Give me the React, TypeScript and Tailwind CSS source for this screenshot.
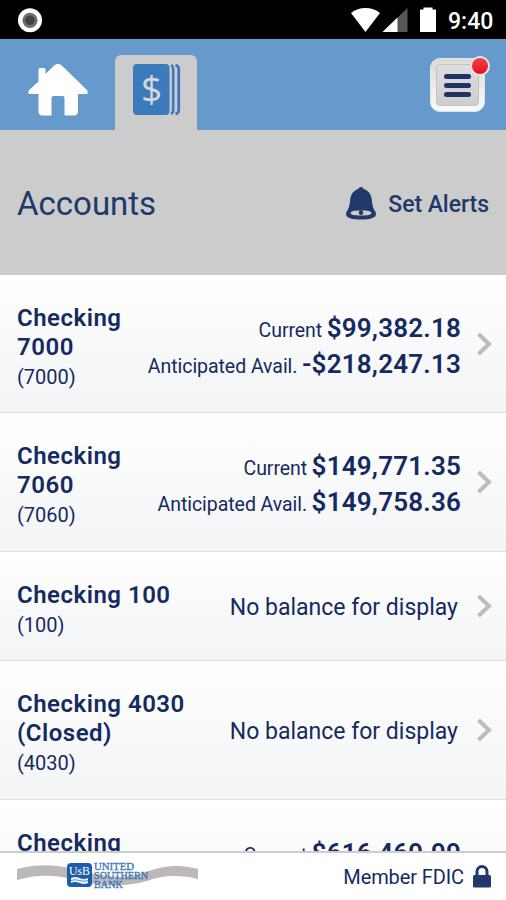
import React from 'react';

type Account = {
  name: string[];
  number: string;
  current?: string;
  available?: string;
  height: string;
};

const accounts: Account[] = [
  { name: ['Checking', '7000'], number: '(7000)', current: '$99,382.18', available: '-$218,247.13', height: 'h-[138px]' },
  { name: ['Checking', '7060'], number: '(7060)', current: '$149,771.35', available: '$149,758.36', height: 'h-[139px]' },
  { name: ['Checking 100'], number: '(100)', height: 'h-[109px]' },
  { name: ['Checking 4030', '(Closed)'], number: '(4030)', height: 'h-[139px]' },
  { name: ['Checking'], number: '', current: '$616,469.99', height: 'h-[139px]' }
];

const StatusBar: React.FC = () => (
  <div className="h-[39px] shrink-0 bg-black flex items-center justify-between pl-[18px] pr-[13px]">
    <svg width="25" height="25" viewBox="0 0 25 25" className="mt-[2px]">
      <circle cx="12" cy="12.3" r="12" fill="#fff" />
      <circle cx="12" cy="12.3" r="7.6" fill="#6f6f6f" />
      <circle cx="12" cy="12.3" r="4.8" fill="#444" />
    </svg>
    <div className="flex items-center">
      <svg width="86" height="26" viewBox="0 0 86 26" className="mr-[11px]">
        <path d="M0 6C8-.7 21-.7 29 6L14.500 25Z" fill="#fff" />
        <path d="M56.500 1V25H31.500Z" fill="#555" />
        <path d="M46.500 10.500V25H31.500Z" fill="#fff" />
        <path d="M69 2.500h3.500V.5h9v2H85V25H69Z" fill="#fff" />
      </svg>
      <span className="w-[45px] pt-[3px] text-[23px] font-medium leading-none text-white">9:40</span>
    </div>
  </div>
);

const NavBar: React.FC = () => (
  <nav className="h-[91px] shrink-0 bg-[#6699cc] flex items-end pr-[18px]">
    <button className="w-[115px] h-full">
      <svg width="115" height="91" viewBox="0 0 115 91">
        <path
          d="M28.500 55v-3.500L38.500 42.500V30.500q0-1.500 1.500-1.500h4q1.500 0 1.500 1.500v4.500l9-8.700q3.500-3.200 7 0L87.500 51.500V55H78v17.500q0 4-4 4h-9.500V59q0-2-2-2H53.500q-2 0-2 2v17.500H42.500q-4 0-4-4V55Z"
          fill="#fff"
        />
      </svg>
    </button>
    <button className="w-[82px] h-[75px] bg-[#cccccc] rounded-t-[6px] flex pl-[18px] pt-[9px]">
      <svg width="48" height="51" viewBox="0 0 48 51">
        <rect width="36.500" height="51" rx="4" fill="#3c7abc" />
        <path d="M38 1q2.200 1 2.200 4v41q0 3-2.200 4" fill="none" stroke="#3c7abc" strokeWidth="2.600" />
        <path d="M42.500 1q3.200 1 3.200 4v41q0 3-3.200 4" fill="none" stroke="#3c7abc" strokeWidth="2.800" />
        <text x="18.500" y="38" textAnchor="middle" fontFamily="Open Sans, sans-serif" fontSize="37" fill="#d8d8d8">$</text>
      </svg>
    </button>
    <button className="relative ml-auto self-start mt-[19px] mr-[3px] w-[55px] h-[54px] rounded-[10px] bg-gradient-to-b from-[#dadada] to-[#fafafa] border border-[#e5e5e5] p-[5px]">
      <span className="w-full h-full rounded-[4px] bg-gradient-to-b from-[#dedede] to-[#cecece] border border-[#c2c2c2] flex flex-col items-center justify-center gap-[4px]">
        <span className="w-[27px] h-[5px] rounded-full bg-[#223166]" />
        <span className="w-[27px] h-[5px] rounded-full bg-[#223166]" />
        <span className="w-[27px] h-[5px] rounded-full bg-[#223166]" />
      </span>
      <span className="absolute -top-[3px] -right-[6px] w-[20px] h-[20px] rounded-full border-2 border-[#f0e2e6] bg-gradient-to-b from-[#f04048] to-[#e11220]" />
    </button>
  </nav>
);

const Bell: React.FC = () => (
  <svg width="30" height="33" viewBox="0 0 30 33" className="mr-[12px]">
    <path
      fillRule="evenodd"
      d="M15 0c1.500 0 2.200.8 2.600 2c4.500 1.300 7.400 5 8.100 10c.6 6 1.300 8.500 2.900 11.500c1 1.500 1.400 2.500 1.400 3.700c0 3.800-6.500 5.300-15 5.300s-15-1.500-15-5.300c0-1.200.4-2.200 1.400-3.700C3 20.500 3.700 18 4.300 12c.7-5 3.600-8.700 8.100-10c.4-1.200 1.100-2 2.600-2ZM15 23.500C8 23.500 4.500 24.300 4.500 26S8 28.500 15 28.500s10.500-.8 10.500-2.500S22 23.500 15 23.500Z"
      fill="#20386c"
    />
    <ellipse cx="15" cy="25.500" rx="2.200" ry="2.500" fill="#20386c" />
  </svg>
);

const Balance: React.FC<{ label: string; amount: string }> = ({ label, amount }) => (
  <div className="h-[36px] flex items-baseline justify-end gap-[4.5px] text-[19.5px] leading-[36px]">
    <span className="tracking-[-0.05px]">{label}</span>
    <b className="text-[26px] font-semibold tracking-[0.2px]">{amount}</b>
  </div>
);

const AccountRow: React.FC<{ account: Account }> = ({ account }) => (
  <li className={`${account.height} shrink-0 flex items-center pl-[17px] pr-[14px] border-b border-[#dddfe1] bg-gradient-to-b from-white to-[#f3f4f6]`}>
    <div className="whitespace-nowrap self-start pt-[29px]">
      {account.name.map((line) => (
        <div key={line} className="text-[24px] leading-[29px] font-semibold tracking-[0.5px]">{line}</div>
      ))}
      <div className="text-[20px] leading-[30px]">{account.number}</div>
    </div>
    {account.current ? (
      <div className="ml-auto self-start pt-[35px] mr-[16px] whitespace-nowrap">
        <Balance label="Current" amount={account.current} />
        {account.available && <Balance label="Anticipated Avail." amount={account.available} />}
      </div>
    ) : (
      <div className="ml-auto mr-[19px] pt-[4px] text-[23px] whitespace-nowrap">No balance for display</div>
    )}
    <svg width="15" height="24" viewBox="0 0 15 24" className="shrink-0">
      <path d="M1.500 2L12 12L1.500 22" fill="none" stroke="#bdbdbd" strokeWidth="4" />
    </svg>
  </li>
);

const BankLogo: React.FC = () => (
  <svg width="182" height="30" viewBox="0 0 182 30">
    <path d="M0 7C18 2 35 2 54 6.500C85 14 106 18 126 11C147 3 162 2 181 7V17C160 12 145 14 130 19C106 26 80 24 54 17C35 12 18 13 0 18Z" fill="#bcb8b8" />
    <rect x="50" y="1" width="25" height="24" rx="4" fill="#1c5ca8" />
    <g fontFamily="Liberation Serif, serif">
      <text x="52" y="12.500" fontSize="12" fill="#fff" textLength="21" lengthAdjust="spacingAndGlyphs">UsB</text>
      <g fill="#3976b8" stroke="#3976b8" strokeWidth="0.3" fontSize="10.500">
        <text x="77" y="7.800" textLength="40" lengthAdjust="spacingAndGlyphs">UNITED</text>
        <text x="77" y="16.800" textLength="54" lengthAdjust="spacingAndGlyphs">SOUTHERN</text>
        <text x="77" y="25.500" textLength="29" lengthAdjust="spacingAndGlyphs">BANK</text>
      </g>
    </g>
    <path d="M54 16q4-2 8.500 0t8.500 0v5q-4 2-8.500 0t-8.500 0Z" fill="#e6eef8" />
    <path d="M54 18.500q4-1.500 8.500 0t8.500 0" fill="none" stroke="#6d98cc" />
  </svg>
);

const App: React.FC = () => (
  <div className="w-[506px] h-[900px] flex flex-col overflow-hidden bg-white text-[#152a60] font-['Roboto',sans-serif]">
    <StatusBar />
    <NavBar />
    <header className="h-[145px] shrink-0 bg-[#cccccc] flex items-center pt-[2px] pl-[17px] pr-[17px]">
      <h1 className="text-[33px] text-[#20386c]">Accounts</h1>
      <button className="ml-auto flex items-center text-[23px] font-medium text-[#20386c]">
        <Bell />
        <span className="pt-[3px] tracking-[-0.05px]">Set Alerts</span>
      </button>
    </header>
    <ul className="flex-1 min-h-0 flex flex-col overflow-hidden">
      {accounts.map((account, idx) => (
        <AccountRow key={idx} account={account} />
      ))}
    </ul>
    <footer className="h-[49px] shrink-0 bg-white border-t-2 border-[#cccccc] flex items-center justify-between pl-[17px] pr-[15px]">
      <BankLogo />
      <div className="flex items-center text-[20px] tracking-[-0.1px]">
        <span className="pt-px">Member FDIC</span>
        <svg width="18" height="23" viewBox="0 0 18 23" className="ml-[9px]">
          <path d="M4 11V6.500a5 5 0 0 1 10 0V11" fill="none" stroke="#20386c" strokeWidth="3" />
          <rect x="0" y="10" width="18" height="12.500" rx="1.500" fill="#20386c" />
        </svg>
      </div>
    </footer>
  </div>
);

export default App;
